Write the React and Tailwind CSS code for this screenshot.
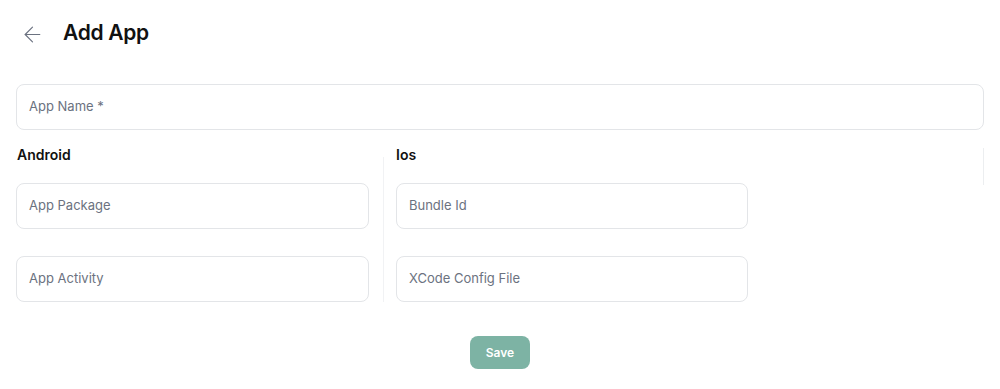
import { ArrowLeft } from 'lucide-react';

const font = { fontFamily: 'Inter, "Noto Sans", sans-serif' };

function Field({ label, className = '' }) {
  return (
    <div
      className={`h-[46px] flex items-center px-3 rounded-lg border border-[#e3e5e8] bg-white text-[13px] text-[#6b7280] ${className}`}
    >
      {label}
    </div>
  );
}

export default function App() {
  return (
    <div className="w-[1000px] h-[389px] bg-white px-4 pt-[18px]" style={font}>
      {/* header */}
      <div className="flex items-center h-[30px]">
        <ArrowLeft className="ml-[4px] mt-[2px] w-[25px] h-[25px] text-[#6b7280]" strokeWidth={1.1} />
        <h1 className="ml-[18px] text-[21px] font-semibold text-[#111] tracking-[-0.3px]">Add App</h1>
      </div>

      <Field label="App Name *" className="mt-[36px]" />

      {/* platform columns */}
      <div className="flex mt-[14px]">
        <div className="w-[353px]">
          <div className="h-[20px] flex items-center text-[14px] font-semibold text-[#111] pl-px">Android</div>
          <Field label="App Package" className="mt-[19px]" />
          <Field label="App Activity" className="mt-[27px]" />
        </div>

        <div className="ml-[14px] mt-[13px] w-px bg-[#f1f2f4]" />

        <div className="ml-[12px] w-[352px]">
          <div className="h-[20px] flex items-center text-[14px] font-semibold text-[#111]">Ios</div>
          <Field label="Bundle Id" className="mt-[19px]" />
          <Field label="XCode Config File" className="mt-[27px]" />
        </div>

        <div className="ml-auto mt-[4px] w-px h-[37px] bg-[#eceef0]" />
      </div>

      <div className="flex justify-center mt-[34px]">
        <button
          type="button"
          className="w-[60px] h-[33px] rounded-lg bg-[#7db3a4] text-white text-[12px] font-semibold"
        >
          Save
        </button>
      </div>
    </div>
  );
}
